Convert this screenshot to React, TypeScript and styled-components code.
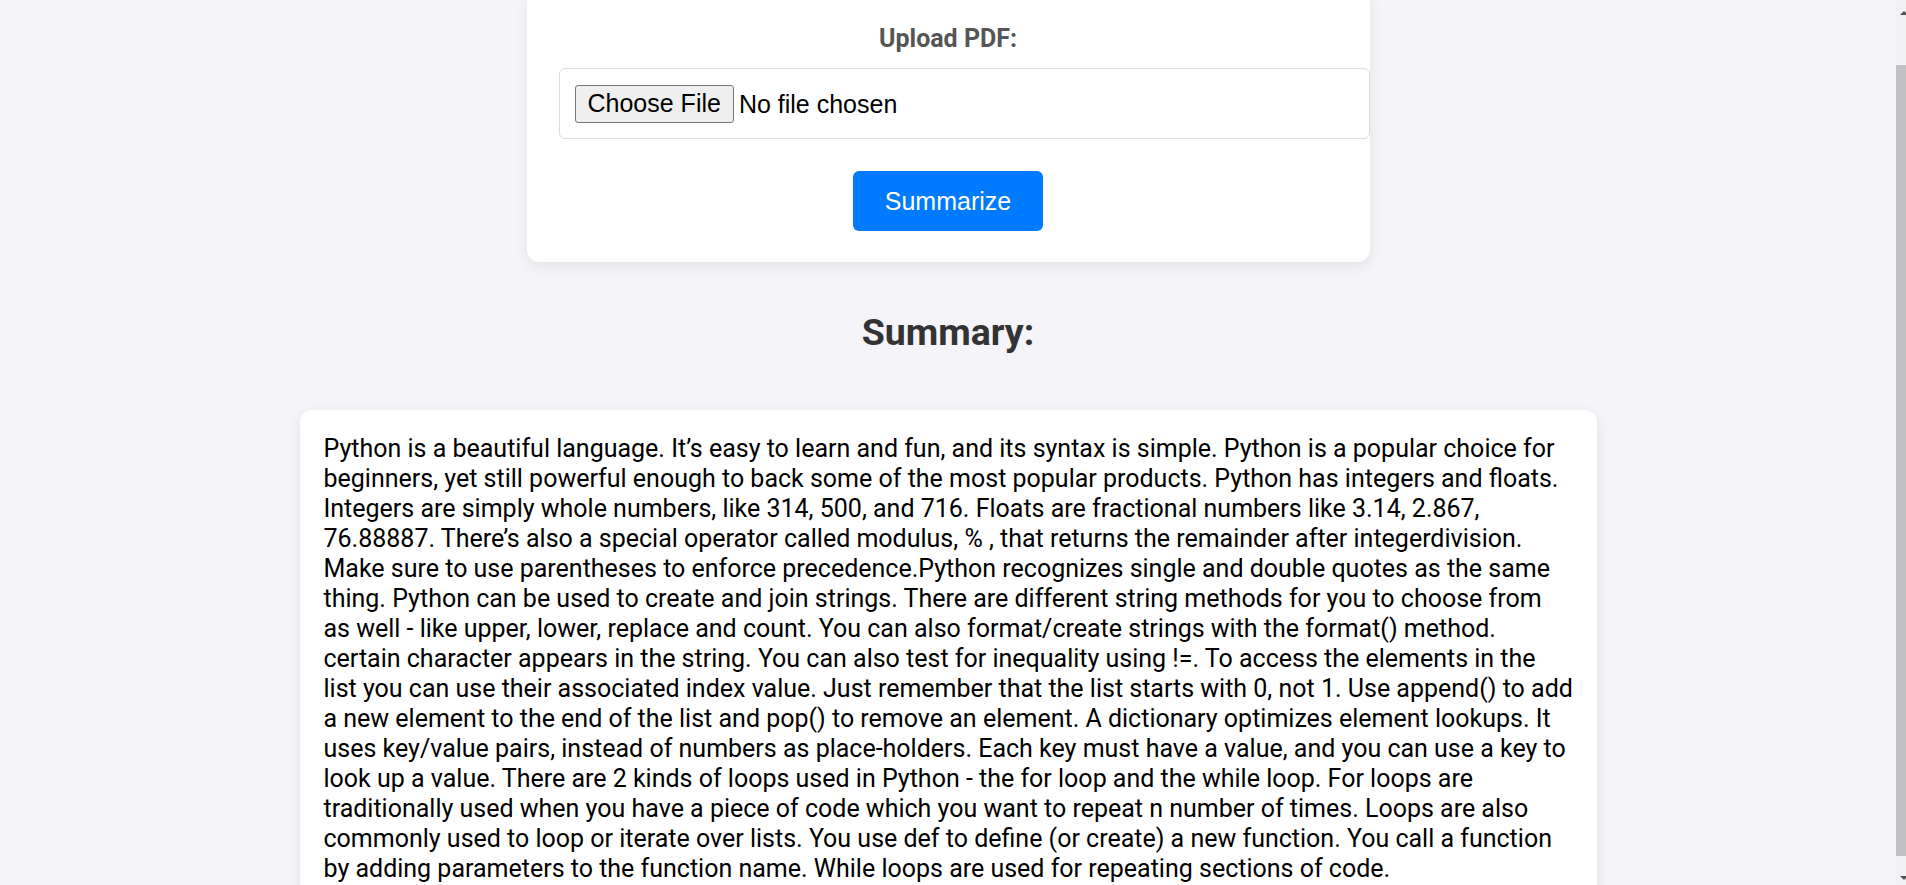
import React, { useLayoutEffect, useRef } from 'react';
import styled, { createGlobalStyle } from 'styled-components';

const GlobalStyle = createGlobalStyle`
  html, body {
    margin: 0;
    padding: 0;
    height: 100%;
    overflow: hidden;
  }
  body {
    background: #f4f4f9;
    font-family: Roboto, "Noto Sans", Arial, sans-serif;
  }
  #root {
    height: 100%;
  }
`;

const Window = styled.div`
  display: flex;
  height: 100vh;
  background: #f4f4f9;
`;

const Viewport = styled.div`
  flex: 1;
  min-width: 0;
  height: 100%;
  overflow: hidden;
`;

const ScrollBar = styled.div`
  flex: 0 0 10px;
  display: flex;
  flex-direction: column;
  background: #f1f1f1;
  overflow: hidden;
`;

const ScrollButton = styled.div<{ $pad: number }>`
  flex: 0 0 15px;
  box-sizing: border-box;
  padding-top: ${(p) => p.$pad}px;
  padding-left: 4px;
  width: 20px;
`;

const Arrow = styled.div<{ $dir: 'up' | 'down' }>`
  width: 0;
  height: 0;
  border-left: 4px solid transparent;
  border-right: 4px solid transparent;
  ${(p) =>
    p.$dir === 'up'
      ? 'border-bottom: 4px solid #505050;'
      : 'border-top: 4px solid #505050;'}
`;

const Track = styled.div<{ $offset: number }>`
  flex: 1;
  padding-top: ${(p) => p.$offset}px;
`;

const Thumb = styled.div<{ $size: number }>`
  height: ${(p) => p.$size}px;
  background: #c1c1c1;
`;

const Page = styled.main`
  display: flex;
  flex-direction: column;
  align-items: center;
  padding: 48px 0 40px;
`;

const UploadCard = styled.form`
  box-sizing: border-box;
  width: 843px;
  padding: 32px 32px 31px;
  background: #ffffff;
  border-radius: 12px;
  box-shadow: 0 4px 14px rgba(0, 0, 0, 0.08);
  display: flex;
  flex-direction: column;
  align-items: center;
`;

const Label = styled.label`
  display: block;
  font-family: Roboto, sans-serif;
  font-weight: 700;
  font-size: 25px;
  color: #555555;
  margin-bottom: 15px;
`;

const FileInput = styled.input`
  align-self: stretch;
  width: 100%;
  box-sizing: content-box;
  padding: 15.6px 15px;
  border: 1px solid #dddddd;
  border-radius: 6px;
  background: #ffffff;
  font-family: "Liberation Sans", Arial, sans-serif;
  font-size: 25px;
  color: #000000;

  &::file-selector-button {
    font-family: "Liberation Sans", Arial, sans-serif;
    font-size: 25px;
    color: #000000;
    background: #efefef;
    border: 1px solid #767676;
    border-radius: 3px;
    padding: 3.5px 12px;
    margin-right: 5px;
  }
`;

const SubmitButton = styled.button`
  margin-top: 32px;
  padding: 15.6px 31.3px;
  border: none;
  border-radius: 6px;
  background: #007bff;
  color: #ffffff;
  font-family: "Liberation Sans", Arial, sans-serif;
  font-size: 25px;
  cursor: pointer;
`;

const Heading = styled.h2`
  margin: 48px 0 56px;
  font-family: Roboto, sans-serif;
  font-weight: 700;
  font-size: 37.5px;
  color: #333333;
`;

const SummaryCard = styled.section`
  box-sizing: border-box;
  width: 1297px;
  padding: 24px 23px 24px 24px;
  background: #ffffff;
  border-radius: 12px;
  box-shadow: 0 4px 14px rgba(0, 0, 0, 0.08);
`;

const SummaryText = styled.p`
  margin: 0;
  font-family: Roboto, sans-serif;
  font-size: 25px;
  line-height: 30px;
  color: #000000;
`;

const summary =
  'Python is a beautiful language. It\u2019s easy to learn and fun, and its syntax is simple. Python is a popular choice for beginners, yet still powerful enough to back some of the most popular products. Python has integers and floats. Integers are simply whole numbers, like 314, 500, and 716. Floats are fractional numbers like 3.14, 2.867, 76.88887. There\u2019s also a special operator called modulus, % , that returns the remainder after integerdivision. Make sure to use parentheses to enforce precedence.Python recognizes single and double quotes as the same thing. Python can be used to create and join strings. There are different string methods for you to choose from as well - like upper, lower, replace and count. You can also format/create strings with the format() method. certain character appears in the string. You can also test for inequality using !=. To access the elements in the list you can use their associated index value. Just remember that the list starts with 0, not 1. Use append() to add a new element to the end of the list and pop() to remove an element. A dictionary optimizes element lookups. It uses key/value pairs, instead of numbers as place-holders. Each key must have a value, and you can use a key to look up a value. There are 2 kinds of loops used in Python - the for loop and the while loop. For loops are traditionally used when you have a piece of code which you want to repeat n number of times. Loops are also commonly used to loop or iterate over lists. You use def to define (or create) a new function. You call a function by adding parameters to the function name. While loops are used for repeating sections of code.';

export default function App() {
  const viewportRef = useRef<HTMLDivElement>(null);

  useLayoutEffect(() => {
    if (viewportRef.current) {
      viewportRef.current.scrollTop = 56;
    }
  }, []);

  return (
    <>
      <GlobalStyle />
      <Window>
        <Viewport ref={viewportRef}>
          <Page>
            <UploadCard onSubmit={(e) => e.preventDefault()}>
              <Label htmlFor="pdf">Upload PDF:</Label>
              <FileInput id="pdf" type="file" accept="application/pdf" />
              <SubmitButton type="submit">Summarize</SubmitButton>
            </UploadCard>
            <Heading>Summary:</Heading>
            <SummaryCard>
              <SummaryText>{summary}</SummaryText>
            </SummaryCard>
          </Page>
        </Viewport>
        <ScrollBar aria-hidden="true">
          <ScrollButton $pad={11}>
            <Arrow $dir="up" />
          </ScrollButton>
          <Track $offset={50}>
            <Thumb $size={791} />
          </Track>
          <ScrollButton $pad={6}>
            <Arrow $dir="down" />
          </ScrollButton>
        </ScrollBar>
      </Window>
    </>
  );
}
